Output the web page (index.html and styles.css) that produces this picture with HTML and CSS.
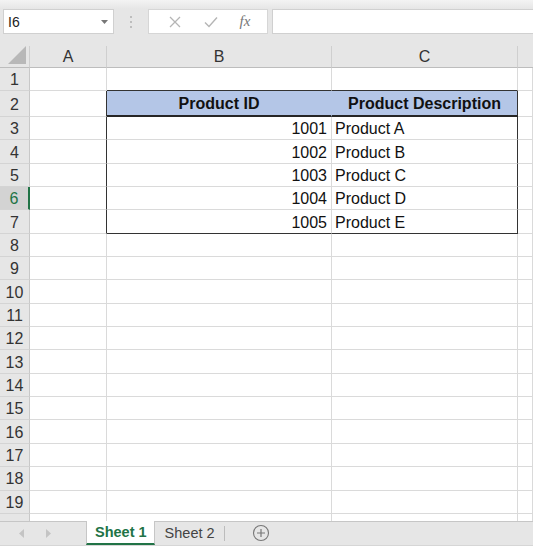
FILE: index.html
```html
<!DOCTYPE html>
<html>
<head>
<meta charset="utf-8">
<link rel="stylesheet" href="styles.css">
</head>
<body>
<div class="app">
  <div class="fbar">
    <div class="namebox"><span>I6</span><svg class="dd" width="7" height="4" viewBox="0 0 7 4"><path d="M0 0h7L3.5 4z" fill="#777"/></svg></div>
    <div class="dots"><i></i><i></i><i></i></div>
    <div class="fbtns">
      <svg width="14" height="14" viewBox="0 0 14 14"><path d="M2 2L12 12M12 2L2 12" stroke="#b5b5b5" stroke-width="1.3" fill="none"/></svg>
      <svg width="16" height="14" viewBox="0 0 16 14"><path d="M2 7.5L6 11.5L14 2.5" stroke="#b5b5b5" stroke-width="1.4" fill="none"/></svg>
      <span class="fx">fx</span>
    </div>
    <div class="finput"></div>
  </div>
  <div class="grid">
    <div class="ch corner"><svg width="18" height="18" viewBox="0 0 18 18"><path d="M18 0V18H0z" fill="#b8b8b8"/></svg></div>
    <div class="ch">A</div><div class="ch">B</div><div class="ch">C</div><div class="ch last"></div>

    <div class="rh">1</div><div class="c r1 ar"></div><div class="c r1 tb"></div><div class="c r1 tb"></div><div class="c r1"></div>
    <div class="rh r2">2</div><div class="c r2 lb"></div><div class="c r2 hd hb">Product ID</div><div class="c r2 hd hc">Product Description</div><div class="c r2"></div>

    <div class="rh">3</div><div class="c lb"></div><div class="c num">1001</div><div class="c txt rb">Product A</div><div class="c"></div>
    <div class="rh">4</div><div class="c lb"></div><div class="c num">1002</div><div class="c txt rb">Product B</div><div class="c"></div>
    <div class="rh">5</div><div class="c lb"></div><div class="c num">1003</div><div class="c txt rb">Product C</div><div class="c"></div>
    <div class="rh sel">6</div><div class="c lb"></div><div class="c num">1004</div><div class="c txt rb">Product D</div><div class="c"></div>
    <div class="rh">7</div><div class="c lb"></div><div class="c num bb">1005</div><div class="c txt rb bb">Product E</div><div class="c"></div>

    <div class="rh">8</div><div class="c"></div><div class="c"></div><div class="c"></div><div class="c"></div>
    <div class="rh">9</div><div class="c"></div><div class="c"></div><div class="c"></div><div class="c"></div>
    <div class="rh">10</div><div class="c"></div><div class="c"></div><div class="c"></div><div class="c"></div>
    <div class="rh">11</div><div class="c"></div><div class="c"></div><div class="c"></div><div class="c"></div>
    <div class="rh">12</div><div class="c"></div><div class="c"></div><div class="c"></div><div class="c"></div>
    <div class="rh">13</div><div class="c"></div><div class="c"></div><div class="c"></div><div class="c"></div>
    <div class="rh">14</div><div class="c"></div><div class="c"></div><div class="c"></div><div class="c"></div>
    <div class="rh">15</div><div class="c"></div><div class="c"></div><div class="c"></div><div class="c"></div>
    <div class="rh">16</div><div class="c"></div><div class="c"></div><div class="c"></div><div class="c"></div>
    <div class="rh">17</div><div class="c"></div><div class="c"></div><div class="c"></div><div class="c"></div>
    <div class="rh">18</div><div class="c"></div><div class="c"></div><div class="c"></div><div class="c"></div>
    <div class="rh">19</div><div class="c"></div><div class="c"></div><div class="c"></div><div class="c"></div>
    <div class="rh stub"></div><div class="c stub"></div><div class="c stub"></div><div class="c stub"></div><div class="c stub"></div>
  </div>
  <div class="tabs">
    <div class="nav">
      <svg width="6" height="9" viewBox="0 0 6 9"><path d="M5 0V9L0 4.5z" fill="#c4c4c4"/></svg>
      <svg width="6" height="9" viewBox="0 0 6 9"><path d="M1 0V9L6 4.5z" fill="#c4c4c4"/></svg>
    </div>
    <div class="tab active">Sheet 1</div>
    <div class="tab">Sheet 2</div>
    <div class="tsep"></div>
    <div class="add"><svg width="18" height="18" viewBox="0 0 18 18"><circle cx="9" cy="9" r="7.5" stroke="#777" stroke-width="1.1" fill="none"/><path d="M9 5V13M5 9H13" stroke="#777" stroke-width="1.2"/></svg></div>
  </div>
  <div class="foot"></div>
</div>
</body>
</html>
```

FILE: styles.css
```css
* { box-sizing: border-box; }
html, body { margin: 0; padding: 0; }
body { width: 533px; height: 552px; overflow: hidden; background: #fff; font-family: "Liberation Sans", Arial, sans-serif; }
.app { width: 533px; display: flex; flex-direction: column; }

.fbar { height: 46px; background: linear-gradient(#f3f3f3 0, #e6e6e6 9px, #e6e6e6 100%); display: flex; align-items: flex-start; padding-top: 9px; padding-left: 3px; }
.namebox { width: 111px; height: 25px; background: #fff; border: 1px solid #d0d0d0; display: flex; align-items: center; justify-content: space-between; padding: 0 5px 0 4px; font-size: 14px; color: #222; }
.dd { margin-top: 1px; }
.dots { width: 34px; height: 25px; display: flex; flex-direction: column; align-items: center; justify-content: center; gap: 3px; }
.dots i { display: block; width: 2px; height: 2px; background: #bdbdbd; }
.fbtns { width: 120px; height: 25px; background: #fff; border: 1px solid #d6d6d6; display: flex; align-items: center; justify-content: space-around; padding: 0 6px 0 8px; }
.fx { font-family: "Liberation Serif", serif; font-style: italic; font-size: 15px; color: #777; }
.finput { flex: 1; height: 25px; margin-left: 4px; background: #fff; border: 1px solid #d0d0d0; border-right: none; }

.grid { display: grid; grid-template-columns: 30px 77px 225px 186px 15px; grid-template-rows: 22px 23px 26px repeat(17, 23.35px) 7px; }
.ch { background: #e6e6e6; border-right: 1px solid #cfcfcf; border-bottom: 1px solid #bdbdbd; display: flex; align-items: center; justify-content: center; font-size: 16px; color: #333; padding-top: 1px; }
.ch.last { border-right: none; }
.corner { justify-content: flex-end; align-items: flex-end; padding: 0 3px 3px 0; }
.rh { background: #e6e6e6; border-right: 1px solid #c8c8c8; border-bottom: 1px solid #d4d4d4; display: flex; align-items: center; justify-content: center; font-size: 16px; color: #333; padding-top: 2px; }
.rh.sel { background: #d3d3d3; color: #217346; border-right: 2px solid #217346; }
.c { border-right: 1px solid #dadada; border-bottom: 1px solid #dadada; font-size: 16px; color: #111; display: flex; align-items: center; white-space: nowrap; padding-top: 2px; }
.stub { border-bottom: none; }
.tb { border-bottom: 1px solid #333; }
.lb, .ar { border-right: 1px solid #333; }
.r1.ar { border-right-color: #dadada; }
.hd { background: #b4c6e7; font-weight: bold; justify-content: center; border-bottom: 2px solid #262626; }
.hb { border-right-color: #b4c6e7; }
.hc { border-right: 1px solid #333; }
.num { justify-content: flex-end; padding-right: 4px; }
.txt { padding-left: 3px; }
.rb { border-right: 1px solid #333; }
.bb { border-bottom: 1px solid #333; }

.tabs { height: 25px; background: #e6e6e6; border-top: 1px solid #c6c6c6; border-bottom: 1px solid #d6d6d6; display: flex; align-items: stretch; }
.nav { width: 86px; display: flex; align-items: center; gap: 20px; padding-left: 19px; }
.tab { display: flex; align-items: center; padding: 0 9px 0 10px; font-size: 14.5px; color: #444; }
.tab.active { background: #fff; color: #217346; font-weight: bold; border-left: 1px solid #c6c6c6; border-right: 1px solid #c6c6c6; border-bottom: 2px solid #217346; padding: 0 7px 0 8px; margin-top: -1px; }
.tsep { width: 1px; background: #bcbcbc; margin: 4px 0 4px 0; }
.add { display: flex; align-items: center; padding-left: 27px; }
.foot { height: 7px; background: #fff; }
```
